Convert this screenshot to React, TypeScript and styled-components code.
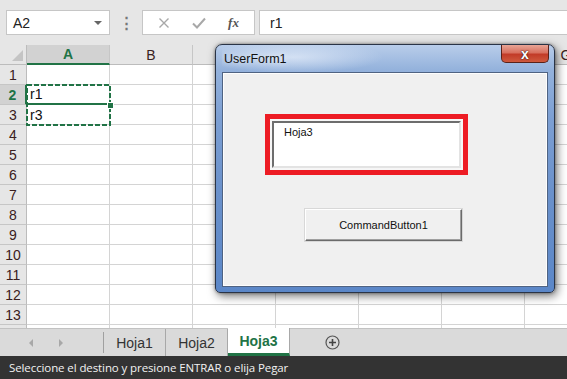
import React from "react";
import styled, { createGlobalStyle } from "styled-components";

const GREEN = "#217346";
const COLS = ["A", "B", "C", "D", "E", "F", "G"];
const ROWS = Array.from({ length: 14 }, (_, i) => i + 1);
const DATA: Record<string, string> = { A2: "r1", A3: "r3" };
const TABS = ["Hoja1", "Hoja2", "Hoja3"];

const GlobalStyle = createGlobalStyle`
  html, body {
    margin: 0;
    padding: 0;
    background: #ffffff;
  }
  body {
    font-family: "Liberation Sans", Arial, sans-serif;
  }
`;

const Page = styled.div`
  position: relative;
  width: 567px;
  height: 379px;
  overflow: hidden;
  display: flex;
  flex-direction: column;
`;

/* formula bar */

const Toolbar = styled.div`
  height: 45px;
  flex: none;
  background: #e6e6e6;
  box-sizing: border-box;
  padding: 10px 0 0 6px;
  display: flex;
  align-items: flex-start;
`;

const NameBox = styled.div`
  width: 104px;
  height: 25px;
  box-sizing: border-box;
  background: #fff;
  border: 1px solid #c6c6c6;
  display: flex;
  align-items: center;
  justify-content: space-between;
  padding: 0 7px 0 6px;
  font-size: 14px;
  color: #222;
  &::after {
    content: "";
    border-left: 4px solid transparent;
    border-right: 4px solid transparent;
    border-top: 4px solid #666;
  }
`;

const Dots = styled.div`
  width: 32px;
  height: 25px;
  display: flex;
  align-items: center;
  justify-content: center;
  color: #777;
  font-size: 15px;
  font-weight: bold;
`;

const FxBox = styled.div`
  width: 113px;
  height: 25px;
  box-sizing: border-box;
  background: #fff;
  border: 1px solid #c6c6c6;
  display: flex;
  align-items: center;
  justify-content: space-around;
  padding: 0 4px;
  color: #a8a8a8;
`;

const FxLabel = styled.span`
  font-family: "Liberation Serif", serif;
  font-style: italic;
  font-weight: bold;
  font-size: 13px;
  color: #555;
`;

const FormulaInput = styled.div`
  flex: 1;
  margin-left: 4px;
  height: 25px;
  box-sizing: border-box;
  background: #fff;
  border: 1px solid #c6c6c6;
  border-right: none;
  display: flex;
  align-items: center;
  padding-left: 10px;
  font-size: 14px;
  color: #222;
`;

/* sheet */

const Sheet = styled.div`
  position: relative;
  height: 283px;
  flex: none;
  overflow: hidden;
  display: grid;
  grid-template-columns: 27px repeat(7, 83px);
  grid-auto-rows: 20px;
  background: #fff;
`;

const Corner = styled.div`
  background: #e6e6e6;
  border-right: 1px solid #bcbcbc;
  border-bottom: 1px solid #bcbcbc;
  box-sizing: border-box;
  position: relative;
  &::after {
    content: "";
    position: absolute;
    right: 3px;
    bottom: 3px;
    border-left: 11px solid transparent;
    border-bottom: 11px solid #c4c4c4;
  }
`;

const ColHead = styled.div<{ $sel?: boolean }>`
  box-sizing: border-box;
  background: ${(p) => (p.$sel ? "#d2d2d2" : "#e6e6e6")};
  border-right: 1px solid #c6c6c6;
  border-bottom: ${(p) => (p.$sel ? `2px solid ${GREEN}` : "1px solid #bcbcbc")};
  color: ${(p) => (p.$sel ? GREEN : "#3a2020")};
  font-weight: ${(p) => (p.$sel ? "bold" : "normal")};
  font-size: 14px;
  display: flex;
  align-items: center;
  justify-content: center;
`;

const RowHead = styled.div<{ $sel?: boolean }>`
  box-sizing: border-box;
  background: ${(p) => (p.$sel ? "#d2d2d2" : "#e6e6e6")};
  border-right: ${(p) => (p.$sel ? `2px solid ${GREEN}` : "1px solid #bcbcbc")};
  border-bottom: 1px solid #c6c6c6;
  color: ${(p) => (p.$sel ? GREEN : "#3a2020")};
  font-weight: ${(p) => (p.$sel ? "bold" : "normal")};
  font-size: 14px;
  display: flex;
  align-items: center;
  justify-content: center;
`;

const Cell = styled.div<{ $active?: boolean }>`
  box-sizing: border-box;
  border-right: 1px solid #d4d4d4;
  border-bottom: ${(p) => (p.$active ? `2px solid ${GREEN}` : "1px solid #d4d4d4")};
  font-size: 14px;
  color: #111;
  padding-left: 3px;
  display: flex;
  align-items: center;
`;

const CopyRange = styled.svg`
  position: absolute;
  left: 26px;
  top: 39px;
  overflow: visible;
`;

const FillHandle = styled.div`
  position: absolute;
  left: 107px;
  top: 57px;
  width: 5px;
  height: 5px;
  background: ${GREEN};
  border: 1px solid #fff;
`;

/* sheet tabs */

const TabBar = styled.div`
  height: 28px;
  flex: none;
  box-sizing: border-box;
  background: #dadada;
  border-top: 1px solid #c2c2c2;
  display: flex;
  align-items: stretch;
`;

const Nav = styled.div`
  width: 104px;
  display: flex;
  align-items: center;
  padding-left: 29px;
  gap: 26px;
  box-sizing: border-box;
  border-right: 1px solid #a0a0a0;
  margin: 3px 0 3px;
`;

const Arrow = styled.span<{ $right?: boolean }>`
  width: 0;
  height: 0;
  border-top: 4px solid transparent;
  border-bottom: 4px solid transparent;
  ${(p) =>
    p.$right ? "border-left: 4px solid #a8a8a8;" : "border-right: 4px solid #a8a8a8;"}
`;

const Tab = styled.div<{ $active?: boolean }>`
  width: 62px;
  box-sizing: border-box;
  display: flex;
  align-items: center;
  justify-content: center;
  font-size: 14px;
  color: ${(p) => (p.$active ? GREEN : "#333")};
  font-weight: ${(p) => (p.$active ? "bold" : "normal")};
  background: ${(p) => (p.$active ? "#fff" : "transparent")};
  border-right: 1px solid #a8a8a8;
  border-bottom: ${(p) => (p.$active ? `3px solid ${GREEN}` : "none")};
  margin-top: ${(p) => (p.$active ? "-1px" : "0")};
`;

const AddSheet = styled.div`
  width: 84px;
  display: flex;
  align-items: center;
  justify-content: center;
`;

const StatusBar = styled.div`
  height: 23px;
  flex: none;
  background: #333333;
  color: #f2f2f2;
  font-family: "Open Sans", "Liberation Sans", sans-serif;
  font-size: 11.5px;
  letter-spacing: -0.1px;
  display: flex;
  align-items: center;
  padding-left: 9px;
`;

/* user form window */

const Window = styled.div`
  position: absolute;
  left: 215px;
  top: 44px;
  width: 340px;
  height: 249px;
  box-sizing: border-box;
  border: 1px solid #2a3446;
  border-radius: 7px 7px 5px 5px;
  background: linear-gradient(
    180deg,
    #b9cdea 0%,
    #94b2dc 10%,
    #7c9fd3 30%,
    #6a91cb 60%,
    #5b87c8 100%
  );
  box-shadow: 2px 3px 10px rgba(0, 0, 0, 0.55), 0 0 3px rgba(0, 0, 0, 0.4);
  display: flex;
  flex-direction: column;
  padding: 0 6px 5px 6px;
`;

const TitleBar = styled.div`
  height: 27px;
  flex: none;
  display: flex;
  align-items: flex-start;
  justify-content: space-between;
  background: radial-gradient(
    ellipse 90px 16px at 22% 45%,
    rgba(230, 238, 250, 0.7),
    rgba(230, 238, 250, 0)
  );
`;

const Title = styled.span`
  font-size: 12.5px;
  color: #111;
  margin: 7px 0 0 2px;
  text-shadow: 0 0 6px rgba(255, 255, 255, 0.8);
`;

const CloseButton = styled.div`
  width: 48px;
  height: 18px;
  box-sizing: border-box;
  margin-right: -1px;
  border: 1px solid #5a2219;
  border-top: none;
  border-radius: 0 0 5px 5px;
  background: linear-gradient(180deg, #e8a596 0%, #d8705f 45%, #c23b28 55%, #cf5a3e 100%);
  display: flex;
  align-items: center;
  justify-content: center;
  color: #fff;
  font-size: 14px;
  font-weight: bold;
  line-height: 1;
  text-shadow: 0 0 2px #3a1a14, 0 0 1px #3a1a14;
`;

const Client = styled.div`
  flex: 1;
  background: #f0f0f0;
  border: 1px solid #4f6382;
  box-shadow: inset 0 0 0 1px #fdfdfd;
  display: flex;
  flex-direction: column;
  align-items: flex-start;
  padding: 41px 0 0 42px;
`;

const Highlight = styled.div`
  border: 5px solid #ed1c24;
  padding: 2px;
  background: #f6f6f6;
`;

const TextBox = styled.div`
  width: 189px;
  height: 47px;
  box-sizing: border-box;
  background: #fff;
  border-top: 2px solid #6d6d6d;
  border-left: 2px solid #6d6d6d;
  border-right: 2px solid #e3e3e3;
  border-bottom: 2px solid #e3e3e3;
  font-size: 11px;
  color: #111;
  padding: 3px 0 0 10px;
`;

const CommandButton = styled.div`
  margin: 34px 0 0 40px;
  width: 157px;
  height: 32px;
  box-sizing: border-box;
  background: #f0f0f0;
  border-top: 1px solid #fff;
  border-left: 1px solid #fff;
  border-right: 1px solid #6b6b6b;
  border-bottom: 1px solid #6b6b6b;
  box-shadow: inset -1px -1px 0 #a0a0a0, 0 0 0 1px #d8d8d8;
  display: flex;
  align-items: center;
  justify-content: center;
  font-size: 11px;
  color: #111;
`;

const App = () => {
  return (
    <Page>
      <GlobalStyle />
      <Toolbar>
        <NameBox>A2</NameBox>
        <Dots>⋮</Dots>
        <FxBox>
          <svg width="12" height="12" viewBox="0 0 12 12">
            <path d="M1.5 1.5l9 9M10.5 1.5l-9 9" stroke="#a8a8a8" strokeWidth="1.4" />
          </svg>
          <svg width="14" height="12" viewBox="0 0 14 12">
            <path d="M1 6.5l4 4L13 1.5" stroke="#a8a8a8" strokeWidth="2" fill="none" />
          </svg>
          <FxLabel>fx</FxLabel>
        </FxBox>
        <FormulaInput>r1</FormulaInput>
      </Toolbar>

      <Sheet>
        <Corner />
        {COLS.map((c) => (
          <ColHead key={c} $sel={c === "A"}>
            {c}
          </ColHead>
        ))}
        {ROWS.map((r) => (
          <React.Fragment key={r}>
            {/* row 14 is only a sliver under the tabs, so no label */}
            <RowHead $sel={r === 2}>{r < 14 ? r : null}</RowHead>
            {COLS.map((c) => (
              <Cell key={c} $active={c === "A" && r === 2}>
                {DATA[c + r]}
              </Cell>
            ))}
          </React.Fragment>
        ))}
        <CopyRange width="85" height="42">
          <rect
            x="1"
            y="1"
            width="83"
            height="40"
            fill="none"
            stroke={GREEN}
            strokeWidth="2"
            strokeDasharray="5 2"
          />
        </CopyRange>
        <FillHandle />
      </Sheet>

      <TabBar>
        <Nav>
          <Arrow />
          <Arrow $right />
        </Nav>
        {TABS.map((t) => (
          <Tab key={t} $active={t === "Hoja3"}>
            {t}
          </Tab>
        ))}
        <AddSheet>
          <svg width="15" height="15" viewBox="0 0 15 15">
            <circle cx="7.5" cy="7.5" r="6.5" fill="none" stroke="#555" strokeWidth="1.2" />
            <path d="M7.5 4v7M4 7.5h7" stroke="#444" strokeWidth="1.6" />
          </svg>
        </AddSheet>
      </TabBar>

      <StatusBar>Seleccione el destino y presione ENTRAR o elija Pegar</StatusBar>

      <Window>
        <TitleBar>
          <Title>UserForm1</Title>
          <CloseButton>x</CloseButton>
        </TitleBar>
        <Client>
          <Highlight>
            <TextBox>Hoja3</TextBox>
          </Highlight>
          <CommandButton>CommandButton1</CommandButton>
        </Client>
      </Window>
    </Page>
  );
};

export default App;
